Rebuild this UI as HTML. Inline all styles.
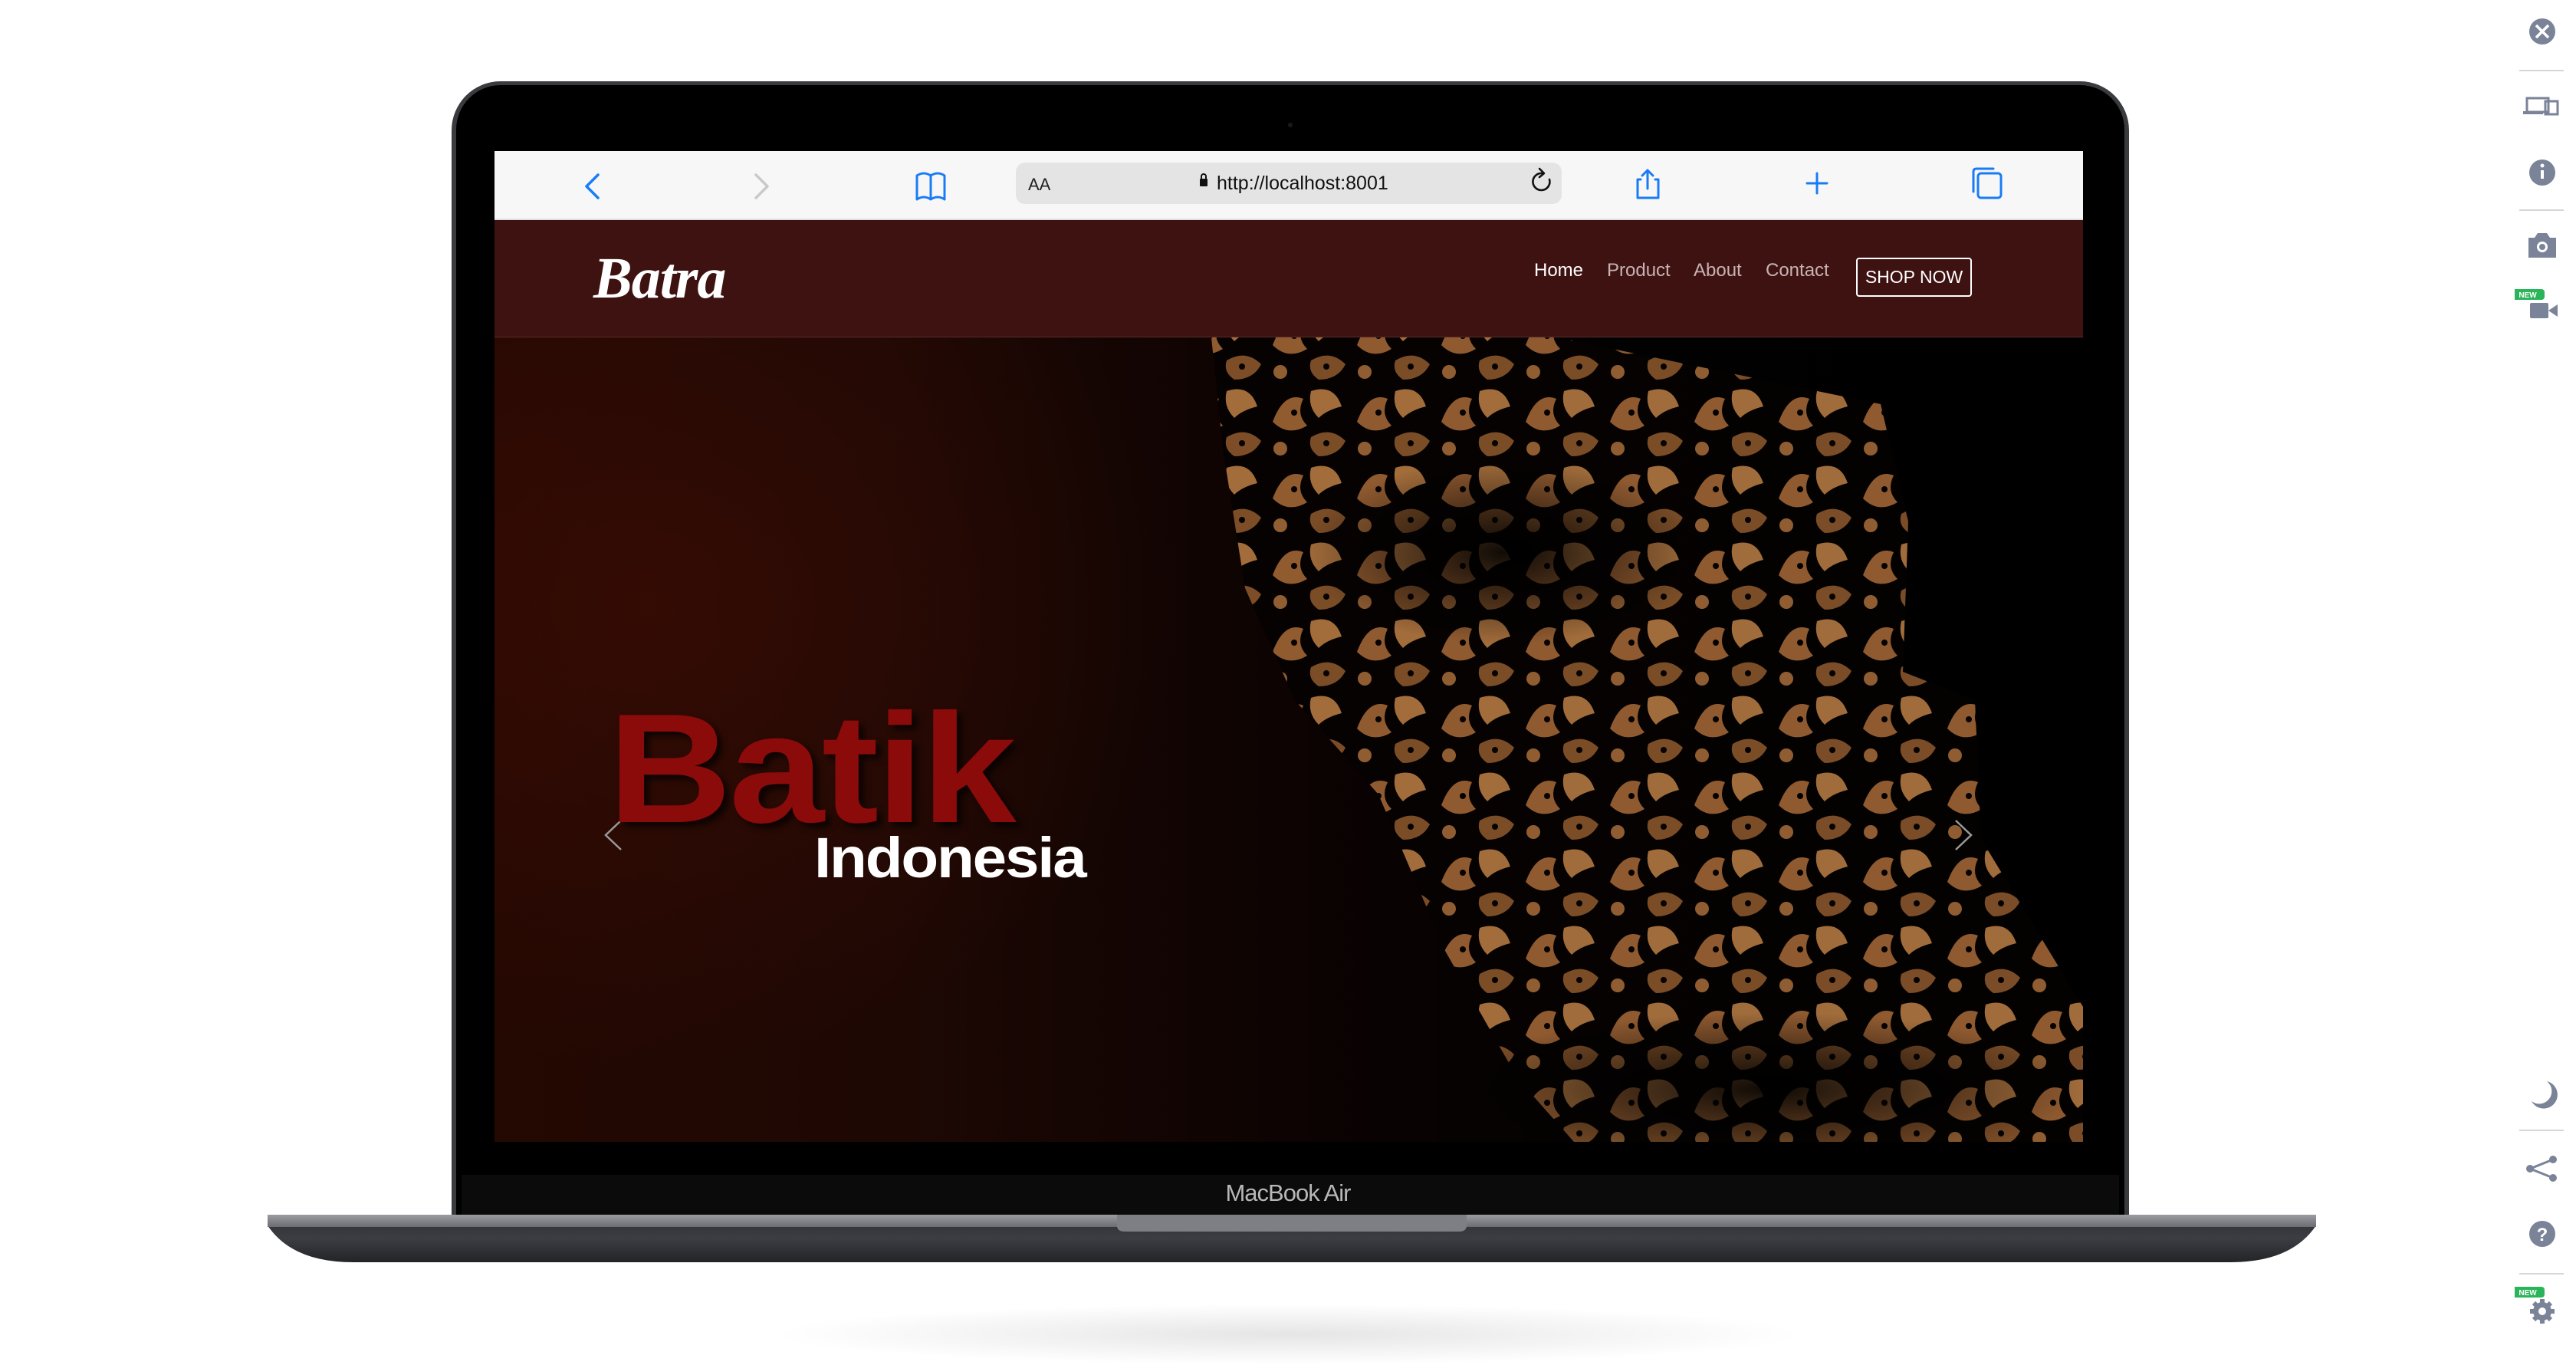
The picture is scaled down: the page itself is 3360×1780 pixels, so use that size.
<!DOCTYPE html>
<html><head><meta charset="utf-8"><style>
*{margin:0;padding:0;box-sizing:border-box}
body{width:3360px;height:1750px;background:#fff;position:relative;overflow:hidden;font-family:"Liberation Sans",sans-serif}
.a{position:absolute}
</style></head><body>
<div class="a" style="left:1000px;top:1700px;width:1360px;height:80px;border-radius:50%;background:radial-gradient(ellipse at center,rgba(0,0,0,.1),rgba(0,0,0,0) 70%)"></div>
<div class="a" style="left:589px;top:106px;width:2188px;height:1490px;border-radius:64px 64px 0 0;background:#3a3b3f;"></div>
<div class="a" style="left:595px;top:111px;width:2176px;height:1480px;border-radius:58px 58px 0 0;background:#000;"></div>
<div class="a" style="left:1680px;top:160px;width:6px;height:6px;border-radius:50%;background:#1a1a1a"></div>
<div class="a" style="left:602px;top:1532px;width:2162px;height:56px;background:#0b0b0b"></div>
<div class="a" style="left:1580px;top:1538px;width:200px;text-align:center;color:#b8b8b8;font-size:31px;letter-spacing:-1px">MacBook Air</div>
<svg class="a" style="left:349px;top:1584px" width="2672" height="62" viewBox="0 0 2672 62">
<defs><linearGradient id="bg" x1="0" y1="0" x2="0" y2="1"><stop offset="0" stop-color="#2e2f33"/><stop offset=".5" stop-color="#3c3d42"/><stop offset="1" stop-color="#232428"/></linearGradient>
<linearGradient id="tg" x1="0" y1="0" x2="0" y2="1"><stop offset="0" stop-color="#9a9ca1"/><stop offset="1" stop-color="#6b6d72"/></linearGradient></defs>
<path d="M0 0 H2672 V14 Q2640 62 2560 62 H112 Q32 62 0 14 Z" fill="url(#bg)"/>
<rect x="0" y="0" width="2672" height="16" fill="url(#tg)"/>
<path d="M1108 0 H1564 V14 Q1564 22 1554 22 H1118 Q1108 22 1108 14 Z" fill="#7d7f84"/>
</svg>
<div class="a" style="left:645px;top:197px;width:2072px;height:90px;background:#f7f7f7;border-bottom:2px solid #e0e0e0"></div>
<svg class="a" style="left:645px;top:197px" width="2072" height="92" viewBox="645 197 2072 92" fill="none" stroke-linecap="round" stroke-linejoin="round">
<path d="M780 228 L765 243 L780 258" stroke="#1a7cf5" stroke-width="3.5"/>
<path d="M986 228 L1001 243 L986 258" stroke="#c9c9c9" stroke-width="3.5"/>
<path d="M1196 229 V260 Q1205 254 1214 260 Q1223 254 1232 260 V229 Q1223 223 1214 229 Q1205 223 1196 229 Z M1214 229 V260" stroke="#1a7cf5" stroke-width="3"/>
<rect x="1325" y="212" width="712" height="54" rx="12" fill="#e4e4e4"/>
<path d="M2021 234 A11 11 0 1 1 2011 226" stroke="#111" stroke-width="2.6"/>
<path d="M2008 220 L2014 226 L2008 231" stroke="#111" stroke-width="2.6"/>
<path d="M2140 234 H2136 V258 H2163 V234 H2159 M2149 246 V222 M2142 229 L2149 222 L2156 229" stroke="#1a7cf5" stroke-width="3"/>
<path d="M2370 226 V252 M2357 239 H2383" stroke="#1a7cf5" stroke-width="3"/>
<rect x="2580" y="226" width="30" height="32" rx="4" stroke="#1a7cf5" stroke-width="3"/>
<path d="M2574 250 V224 Q2574 220 2578 220 H2600" stroke="#1a7cf5" stroke-width="3"/>
<rect x="1565" y="233" width="10" height="10" rx="1" fill="#111"/>
<path d="M1567 234 V230 A3 3 0 0 1 1573 230 V234" stroke="#111" stroke-width="2"/>
</svg>
<div class="a" style="left:1341px;top:228px;font-size:22px;color:#222">AA</div>
<div class="a" style="left:1587px;top:225px;font-size:25px;color:#111">http://localhost:8001</div>
<div class="a" style="left:645px;top:287px;width:2072px;height:153px;background:#3f1212;border-bottom:1px solid #5a2a2a"></div>
<div class="a" style="left:774px;top:320px;font-family:'Liberation Serif',serif;font-style:italic;font-weight:bold;font-size:76px;color:#fff;letter-spacing:-1px">Batra</div>
<div class="a" style="left:2001px;top:339px;font-size:24px;color:#fff">Home</div>
<div class="a" style="left:2096px;top:339px;font-size:24px;color:#c7b3b3">Product</div>
<div class="a" style="left:2209px;top:339px;font-size:24px;color:#c7b3b3">About</div>
<div class="a" style="left:2303px;top:339px;font-size:24px;color:#c7b3b3">Contact</div>
<div class="a" style="left:2421px;top:336px;width:151px;height:51px;border:2px solid #fff;border-radius:4px;color:#fff;font-size:23px;text-align:center;line-height:47px">SHOP NOW</div>
<div class="a" style="left:645px;top:440px;width:2072px;height:1049px;overflow:hidden;background:radial-gradient(ellipse 700px 600px at 200px 350px,rgba(70,15,5,.5),rgba(0,0,0,0)),linear-gradient(90deg,#240802 0%,#1e0804 25%,#0c0302 50%,#020101 70%,#000 100%)">
<svg class="a" style="left:0;top:0" width="2072" height="1049" viewBox="645 440 2072 1049">
<defs>
<pattern id="p" width="110" height="100" patternUnits="userSpaceOnUse">
<rect width="110" height="100" fill="#050201"/>
<path d="M10 50 Q25 10 50 20 Q40 40 55 55 Q30 70 10 50Z" fill="#a86a38"/>
<path d="M60 10 Q90 0 100 30 Q80 35 70 45 Q55 30 60 10Z" fill="#bd7f45"/>
<path d="M60 70 Q85 55 105 75 Q95 95 70 95 Q55 85 60 70Z" fill="#8f5a2e"/>
<circle cx="20" cy="85" r="9" fill="#a86d3a"/>
<circle cx="38" cy="38" r="4" fill="#050201"/>
<circle cx="80" cy="78" r="4" fill="#050201"/>
</pattern>
<radialGradient id="dk" cx=".5" cy=".5" r=".5"><stop offset="0" stop-color="#000" stop-opacity=".9"/><stop offset="1" stop-color="#000" stop-opacity="0"/></radialGradient>
</defs>
<path d="M1580 440 H2031 L2453 527 L2489 680 L2482 876 L2576 913 L2584 1094 L2717 1313 V1489 H2053 L1980 1407 L1885 1240 L1798 1036 L1689 913 L1624 767 L1595 585 Z" fill="url(#p)" opacity=".85"/>
<ellipse cx="1960" cy="720" rx="260" ry="120" fill="url(#dk)"/>
<ellipse cx="2300" cy="1420" rx="420" ry="100" fill="url(#dk)"/>
<path d="M810 1070 L790 1089 L810 1108" stroke="#999" stroke-width="2.5" fill="none"/>
<path d="M2551 1070 L2571 1089 L2551 1108" stroke="#999" stroke-width="2.5" fill="none"/>
</svg>
</div>
<div class="a" style="left:793px;top:893px;font-weight:bold;font-size:203px;line-height:220px;color:#8b0a0a;letter-spacing:-3px;transform:scaleX(1.1);transform-origin:left top;text-shadow:6px 6px 8px rgba(0,0,0,.7)">Batik</div>
<div class="a" style="left:1062px;top:1077px;font-weight:bold;font-size:74px;line-height:84px;color:#fff;letter-spacing:-2px;transform:scaleX(1.08);transform-origin:left top">Indonesia</div>
<div class="a" style="left:602px;top:1489px;width:2162px;height:43px;background:#000"></div>
<svg class="a" style="left:3280px;top:0" width="80" height="1750" viewBox="3280 0 80 1750">
<g fill="#7a8397">
<circle cx="3316" cy="41" r="17"/>
<path d="M3308 33 L3324 49 M3324 33 L3308 49" stroke="#fff" stroke-width="3.5"/>
<path d="M3296 128 V146 H3324 V128 Z" fill="none" stroke="#7a8397" stroke-width="3"/>
<rect x="3291" y="145" width="26" height="4"/>
<rect x="3320" y="132" width="16" height="17" fill="none" stroke="#7a8397" stroke-width="3"/>
<circle cx="3316" cy="225" r="17"/>
<rect x="3314" y="222" width="4" height="11" fill="#fff"/><circle cx="3316" cy="216" r="2.5" fill="#fff"/>
<path d="M3298 310 H3306 L3310 304 H3322 L3326 310 H3334 V336 H3298 Z"/>
<circle cx="3316" cy="322" r="7" fill="#fff"/><circle cx="3316" cy="322" r="4"/>
<rect x="3300" y="395" width="24" height="20" rx="2"/><path d="M3324 405 L3336 397 V413 Z"/>
<path d="M3322 1410 A18 18 0 1 1 3302 1436 A14 14 0 0 0 3322 1410Z"/>
<circle cx="3300" cy="1524" r="5"/><circle cx="3330" cy="1512" r="5"/><circle cx="3330" cy="1536" r="5"/>
<path d="M3300 1524 L3330 1512 M3300 1524 L3330 1536" stroke="#7a8397" stroke-width="3"/>
<circle cx="3316" cy="1609" r="17"/>
<text x="3316" y="1618" font-family="Liberation Sans" font-weight="bold" font-size="24" fill="#fff" text-anchor="middle">?</text>
<circle cx="3316" cy="1710" r="12"/>
<path d="M3316 1694 V1726 M3300 1710 H3332 M3305 1699 L3327 1721 M3327 1699 L3305 1721" stroke="#7a8397" stroke-width="6"/>
<circle cx="3316" cy="1710" r="5" fill="#fff"/>
</g>
<g stroke="#d6d6d6" stroke-width="2"><path d="M3286 92 H3344 M3286 274 H3344 M3286 1474 H3344 M3286 1661 H3344"/></g>
<rect x="3276" y="377" width="43" height="14" rx="4" fill="#2bb55a"/>
<text x="3297" y="388" font-family="Liberation Sans" font-weight="bold" font-size="10" fill="#fff" text-anchor="middle">NEW</text>
<rect x="3276" y="1678" width="43" height="14" rx="4" fill="#2bb55a"/>
<text x="3297" y="1689" font-family="Liberation Sans" font-weight="bold" font-size="10" fill="#fff" text-anchor="middle">NEW</text>
</svg>
</body></html>
